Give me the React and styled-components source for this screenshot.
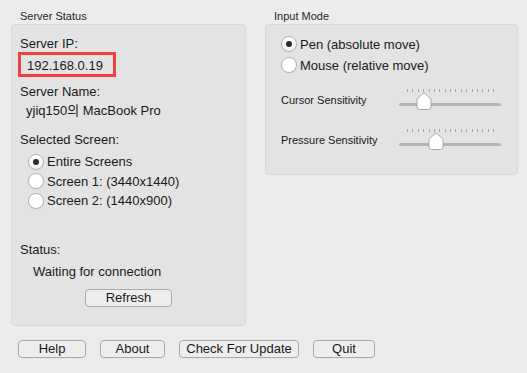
import React from "react";
import styled, { createGlobalStyle } from "styled-components";

const Global = createGlobalStyle`
  html, body { margin: 0; padding: 0; background: #ececec; }
  body {
    font-family: "Liberation Sans", Arial, "Noto Sans CJK KR", sans-serif;
    color: #1a1a1a;
    -webkit-font-smoothing: antialiased;
  }
`;

const Window = styled.div`
  width: 527px;
  height: 373px;
  box-sizing: border-box;
  padding: 9px 0 0 11px;
  display: flex;
  flex-direction: column;
  background: #ececec;
`;

const TopRow = styled.div`
  display: flex;
  gap: 19px;
  align-items: flex-start;
`;

const Group = styled.div`
  display: flex;
  flex-direction: column;
  width: ${(p) => p.$w}px;
`;

const GroupLabel = styled.div`
  font-size: 11px;
  line-height: 15px;
  padding-left: ${(p) => p.$indent || 9}px;
  color: #262626;
`;

const Box = styled.div`
  box-sizing: border-box;
  height: ${(p) => p.$h}px;
  background: #e3e3e3;
  border: 1px solid #d9d9d9;
  border-radius: 4px;
  display: flex;
  flex-direction: column;
  padding: ${(p) => p.$pad};
`;

const Label = styled.div`
  font-size: 13px;
  line-height: 16px;
  margin-top: ${(p) => p.$mt || 0}px;
  padding-left: ${(p) => p.$indent || 0}px;
  white-space: nowrap;
`;

const IpBox = styled.div`
  box-sizing: border-box;
  width: 98px;
  height: 25px;
  margin-left: -2px;
  border: 3px solid #f0413f;
  padding: 3px 0 0 6px;
  font-size: 13px;
  line-height: 16px;
`;

const RadioList = styled.div`
  display: flex;
  flex-direction: column;
  margin-top: ${(p) => p.$mt || 0}px;
  padding-left: ${(p) => p.$indent || 0}px;
  gap: ${(p) => p.$gap || 0}px;
`;

const RadioRow = styled.label`
  display: flex;
  align-items: center;
  height: ${(p) => p.$h || 20}px;
  gap: 3px;
  font-size: 13px;
  white-space: nowrap;
`;

const Circle = styled.span`
  box-sizing: border-box;
  width: 16px;
  height: 16px;
  border-radius: 50%;
  border: 1px solid #b4b4b4;
  background: ${(p) => (p.$on ? "linear-gradient(#ffffff, #f0f0f0)" : "#ffffff")};
  box-shadow: 0 0.5px 1px rgba(0, 0, 0, 0.08);
  display: flex;
  align-items: center;
  justify-content: center;
  &::after {
    content: "";
    width: 6px;
    height: 6px;
    border-radius: 50%;
    background: #2b2b2b;
    display: ${(p) => (p.$on ? "block" : "none")};
  }
`;

const Button = styled.button`
  box-sizing: border-box;
  width: ${(p) => p.$w}px;
  height: 18px;
  padding: 0;
  border: 1px solid #ababab;
  border-radius: 4px;
  background: #ededed;
  font-family: "Liberation Sans", Arial, sans-serif;
  font-size: 13px;
  line-height: 16px;
  color: #1a1a1a;
  box-shadow: 0 0.5px 0 rgba(0, 0, 0, 0.04);
`;

const CenterRow = styled.div`
  display: flex;
  justify-content: center;
  margin-top: ${(p) => p.$mt || 0}px;
  margin-left: -8px;
`;

const BottomBar = styled.div`
  display: flex;
  gap: 14px;
  margin-top: 14px;
  padding-left: 7px;
`;

const SliderRow = styled.div`
  display: flex;
  align-items: center;
  margin-top: ${(p) => p.$mt || 0}px;
`;

const SliderLabel = styled.div`
  width: 118px;
  font-size: 11px;
  line-height: 14px;
  padding-top: 1px;
  white-space: nowrap;
`;

const SliderWrap = styled.div`
  position: relative;
  width: 102px;
  height: 21px;
`;

const Ticks = styled.div`
  position: absolute;
  left: 8px;
  top: 0;
  width: 87px;
  height: 3px;
  display: flex;
  justify-content: space-between;
`;

const Tick = styled.span`
  width: 1px;
  height: 3px;
  background: #a3a3a3;
`;

const Track = styled.div`
  position: absolute;
  left: 0;
  right: 0;
  top: 14px;
  height: 3px;
  border-radius: 2px;
  background: #b3b3b3;
`;

const Thumb = styled.svg`
  position: absolute;
  top: 3px;
  width: 16px;
  height: 18px;
  overflow: visible;
`;

function Slider({ pos }) {
  return (
    <SliderWrap>
      <Ticks>
        {Array.from({ length: 17 }).map((_, i) => (
          <Tick key={i} />
        ))}
      </Ticks>
      <Track />
      <Thumb viewBox="0 0 16 18" style={{ left: pos - 8 }}>
        <path
          d="M3.5 17.5 Q1 17.5 1 15 L1 7.2 L8 0.8 L15 7.2 L15 15 Q15 17.5 12.5 17.5 Z"
          fill="#ffffff"
          stroke="#a9a9a9"
          strokeWidth="1"
          strokeLinejoin="round"
        />
      </Thumb>
    </SliderWrap>
  );
}

export default function App() {
  return (
    <Window>
      <Global />
      <TopRow>
        <Group $w={235}>
          <GroupLabel>Server Status</GroupLabel>
          <Box $h={302} $pad="11px 0 0 8px">
            <Label>Server IP:</Label>
            <IpBox>192.168.0.19</IpBox>
            <Label $mt={7}>Server Name:</Label>
            <Label $mt={3} $indent={6}>yjiq150의 MacBook Pro</Label>
            <Label $mt={13}>Selected Screen:</Label>
            <RadioList $mt={4} $indent={8}>
              <RadioRow $h={19.5}>
                <Circle $on />
                Entire Screens
              </RadioRow>
              <RadioRow $h={19.5}>
                <Circle />
                Screen 1: (3440x1440)
              </RadioRow>
              <RadioRow $h={19.5}>
                <Circle />
                Screen 2: (1440x900)
              </RadioRow>
            </RadioList>
            <Label $mt={31}>Status:</Label>
            <Label $mt={6} $indent={13}>Waiting for connection</Label>
            <CenterRow $mt={9}>
              <Button $w={87}>Refresh</Button>
            </CenterRow>
          </Box>
        </Group>
        <Group $w={253}>
          <GroupLabel>Input Mode</GroupLabel>
          <Box $h={151} $pad="9px 0 0 15px">
            <RadioList $gap={1}>
              <RadioRow>
                <Circle $on />
                Pen (absolute move)
              </RadioRow>
              <RadioRow>
                <Circle />
                Mouse (relative move)
              </RadioRow>
            </RadioList>
            <SliderRow $mt={14}>
              <SliderLabel>Cursor Sensitivity</SliderLabel>
              <Slider pos={25} />
            </SliderRow>
            <SliderRow $mt={19}>
              <SliderLabel>Pressure Sensitivity</SliderLabel>
              <Slider pos={37} />
            </SliderRow>
          </Box>
        </Group>
      </TopRow>
      <BottomBar>
        <Button $w={68}>Help</Button>
        <Button $w={65}>About</Button>
        <Button $w={120}>Check For Update</Button>
        <Button $w={62}>Quit</Button>
      </BottomBar>
    </Window>
  );
}
